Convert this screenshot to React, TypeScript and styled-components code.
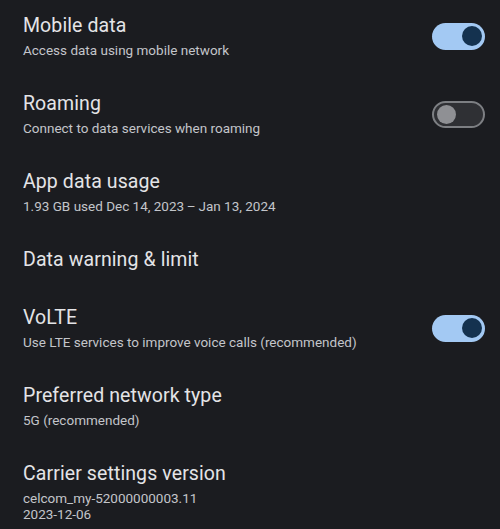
import styled, { createGlobalStyle } from "styled-components";

const GlobalStyle = createGlobalStyle`
  html, body {
    margin: 0;
    padding: 0;
    background: #1b1c20;
  }
  body {
    font-family: Roboto, "Noto Sans", sans-serif;
    -webkit-font-smoothing: antialiased;
  }
`;

type Item = {
  title: string;
  lines?: string[];
  toggle?: boolean;
};

const items: Item[] = [
  { title: "Mobile data", lines: ["Access data using mobile network"], toggle: true },
  { title: "Roaming", lines: ["Connect to data services when roaming"], toggle: false },
  { title: "App data usage", lines: ["1.93 GB used Dec 14, 2023\u2009–\u2009Jan 13, 2024"] },
  { title: "Data warning & limit" },
  {
    title: "VoLTE",
    lines: ["Use LTE services to improve voice calls (recommended)"],
    toggle: true,
  },
  { title: "Preferred network type", lines: ["5G (recommended)"] },
  {
    title: "Carrier settings version",
    lines: ["celcom_my-52000000003.11", "2023-12-06"],
  },
];

const Switch = ({ on }: { on: boolean }) => (
  <Track $on={on}>
    <Knob $on={on} />
  </Track>
);

const App = () => {
  return (
    <>
      <GlobalStyle />
      <List>
        {items.map((item) => (
          <Row key={item.title}>
            <Texts>
              <Title>{item.title}</Title>
              {item.lines && (
                <Summary>
                  {item.lines.map((line) => (
                    <div key={line}>{line}</div>
                  ))}
                </Summary>
              )}
            </Texts>
            {item.toggle !== undefined && <Switch on={item.toggle} />}
          </Row>
        ))}
      </List>
    </>
  );
};

export default App;

const List = styled.div`
  display: flex;
  flex-direction: column;
  width: 500px;
  height: 529px;
  overflow: hidden;
  background: #1b1c20;
`;

const Row = styled.div`
  display: flex;
  align-items: center;
  justify-content: space-between;
  padding: 14px 15px 20px 23px;
`;

const Texts = styled.div`
  display: flex;
  flex-direction: column;
  min-width: 0;
`;

const Title = styled.div`
  font-size: 19.5px;
  line-height: 24px;
  color: #e4e4e7;
  letter-spacing: 0.1px;
`;

const Summary = styled.div`
  margin-top: 4px;
  font-size: 13.5px;
  line-height: 16px;
  color: #c3c5ca;
`;

const Track = styled.div<{ $on: boolean }>`
  box-sizing: border-box;
  width: 53px;
  height: 27px;
  border-radius: 14px;
  display: flex;
  align-items: center;
  padding: 0 3px;
  justify-content: ${(p) => (p.$on ? "flex-end" : "flex-start")};
  background: ${(p) => (p.$on ? "#a3c9f3" : "#2f3034")};
  border: ${(p) => (p.$on ? "none" : "2px solid #7d7f83")};
  flex-shrink: 0;
`;

const Knob = styled.div<{ $on: boolean }>`
  width: ${(p) => (p.$on ? "20px" : "19px")};
  height: ${(p) => (p.$on ? "20px" : "19px")};
  border-radius: 50%;
  background: ${(p) => (p.$on ? "#14324f" : "#8f9094")};
`;
